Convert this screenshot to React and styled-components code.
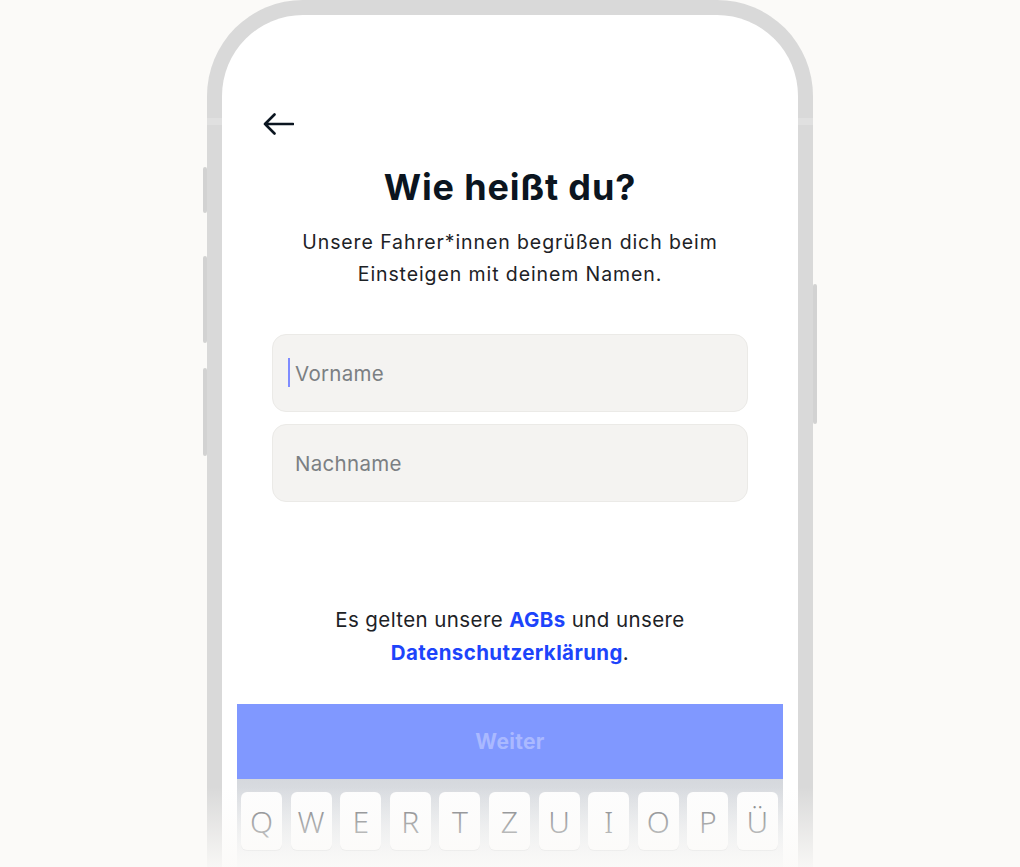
import React from 'react';
import styled, { createGlobalStyle } from 'styled-components';

const GlobalStyle = createGlobalStyle`
  html, body {
    margin: 0;
    padding: 0;
    height: 100%;
    overflow: hidden;
    background: #fbfaf8;
  }
  body {
    font-family: Inter, "Noto Sans", sans-serif;
  }
`;

const Stage = styled.div`
  position: relative;
  width: 1020px;
  height: 867px;
  overflow: hidden;
  display: flex;
  justify-content: center;
`;

const Phone = styled.div`
  position: relative;
  width: 576px;
  height: 900px;
  border: 15px solid #d9d9d9;
  border-bottom: none;
  border-radius: 96px 96px 0 0;
  background: #ffffff;
`;

const SideButton = styled.span`
  position: absolute;
  top: ${p => p.top}px;
  height: ${p => p.h}px;
  width: 4px;
  background: #d2d2d2;
  border-radius: 2px;
  ${p => (p.right ? 'right: -19px;' : 'left: -19px;')}
`;

const Band = styled.span`
  position: absolute;
  top: 103px;
  height: 7px;
  width: 15px;
  background: #e0e0e0;
  ${p => (p.right ? 'right: -15px;' : 'left: -15px;')}
`;

const Screen = styled.div`
  display: flex;
  flex-direction: column;
  height: 100%;
  border-radius: 80px 80px 0 0;
  overflow: hidden;
`;

const BackRow = styled.div`
  padding: 98px 0 0 41px;
  height: 22px;
  display: flex;
  align-items: center;
  color: #0b1520;
`;

const Title = styled.h1`
  margin: 32px 0 0;
  font-family: Inter, "Noto Sans", sans-serif;
  font-size: 36px;
  line-height: 40px;
  font-weight: 700;
  letter-spacing: 0.85px;
  color: #0b1520;
  text-align: center;
`;

const Subtitle = styled.p`
  margin: 19px auto 0;
  width: 470px;
  font-size: 19.5px;
  line-height: 32px;
  font-weight: 400;
  letter-spacing: 0.9px;
  color: #1d2226;
  text-align: center;
`;

const Fields = styled.div`
  margin: 44px auto 0;
  width: 476px;
  display: flex;
  flex-direction: column;
  gap: 12px;
`;

const Field = styled.div`
  position: relative;
  height: 76px;
  border: 1px solid #ebeae7;
  border-radius: 14px;
  background: #f4f3f1;
  display: flex;
  align-items: center;
  padding-left: 22px;
  font-size: 20.5px;
  letter-spacing: 0.3px;
  color: #7b7f83;
`;

const Caret = styled.span`
  position: absolute;
  left: 15px;
  top: 23px;
  width: 2px;
  height: 29px;
  background: #7f8cff;
`;

const Terms = styled.p`
  margin: 101px 0 0;
  font-size: 20.5px;
  line-height: 33px;
  letter-spacing: 0.4px;
  color: #1d2226;
  text-align: center;
`;

const Link = styled.a`
  color: #1d44fb;
  font-weight: 700;
  text-decoration: none;
`;

const Button = styled.button`
  margin: 35px 15px 0;
  height: 75px;
  border: none;
  background: #8098ff;
  color: #aab9ff;
  font-family: Inter, "Noto Sans", sans-serif;
  font-size: 21px;
  letter-spacing: 0.3px;
  font-weight: 700;
`;

const Keyboard = styled.div`
  margin: 0 15px;
  padding: 13px 5px 0 4px;
  height: 120px;
  background: linear-gradient(#d5d8dd, #eceef0 60%, #f7f7f8);
  display: flex;
  justify-content: space-between;
  align-items: flex-start;
`;

const Key = styled.span`
  width: 41px;
  height: 58px;
  border-radius: 6px;
  background: #fdfdfd;
  box-shadow: 0 1px 0 rgba(0, 0, 0, 0.12);
  display: flex;
  align-items: center;
  justify-content: center;
  font-family: "Noto Sans", Inter, sans-serif;
  font-weight: 300;
  font-size: 30px;
  color: #707376;
`;

const Fade = styled.div`
  position: absolute;
  left: 0;
  right: 0;
  bottom: 0;
  height: 80px;
  background: linear-gradient(rgba(251, 250, 248, 0), rgba(251, 250, 248, 0.9));
  pointer-events: none;
`;

const BackArrow = () => (
  <svg width="31" height="22" viewBox="0 0 31 22" fill="none">
    <path
      d="M11.5 1.5 L2 11 L11.5 20.5 M2 11 H30"
      stroke="currentColor"
      strokeWidth="2.6"
      strokeLinecap="round"
      strokeLinejoin="round"
    />
  </svg>
);

const keys = ['Q', 'W', 'E', 'R', 'T', 'Z', 'U', 'I', 'O', 'P', 'Ü'];

export default function App() {
  return (
    <Stage>
      <GlobalStyle />
      <Phone>
        <SideButton top={152} h={46} />
        <SideButton top={241} h={87} />
        <SideButton top={353} h={88} />
        <SideButton right top={269} h={140} />
        <Band />
        <Band right />
        <Screen>
          <BackRow>
            <BackArrow />
          </BackRow>
          <Title>Wie heißt du?</Title>
          <Subtitle>
            Unsere Fahrer*innen begrüßen dich beim Einsteigen mit deinem Namen.
          </Subtitle>
          <Fields>
            <Field>
              <Caret />
              Vorname
            </Field>
            <Field>Nachname</Field>
          </Fields>
          <Terms>
            Es gelten unsere <Link>AGBs</Link> und unsere
            <br />
            <Link>Datenschutzerklärung</Link>.
          </Terms>
          <Button>Weiter</Button>
          <Keyboard>
            {keys.map(k => (
              <Key key={k}>{k}</Key>
            ))}
          </Keyboard>
        </Screen>
      </Phone>
      <Fade />
    </Stage>
  );
}
